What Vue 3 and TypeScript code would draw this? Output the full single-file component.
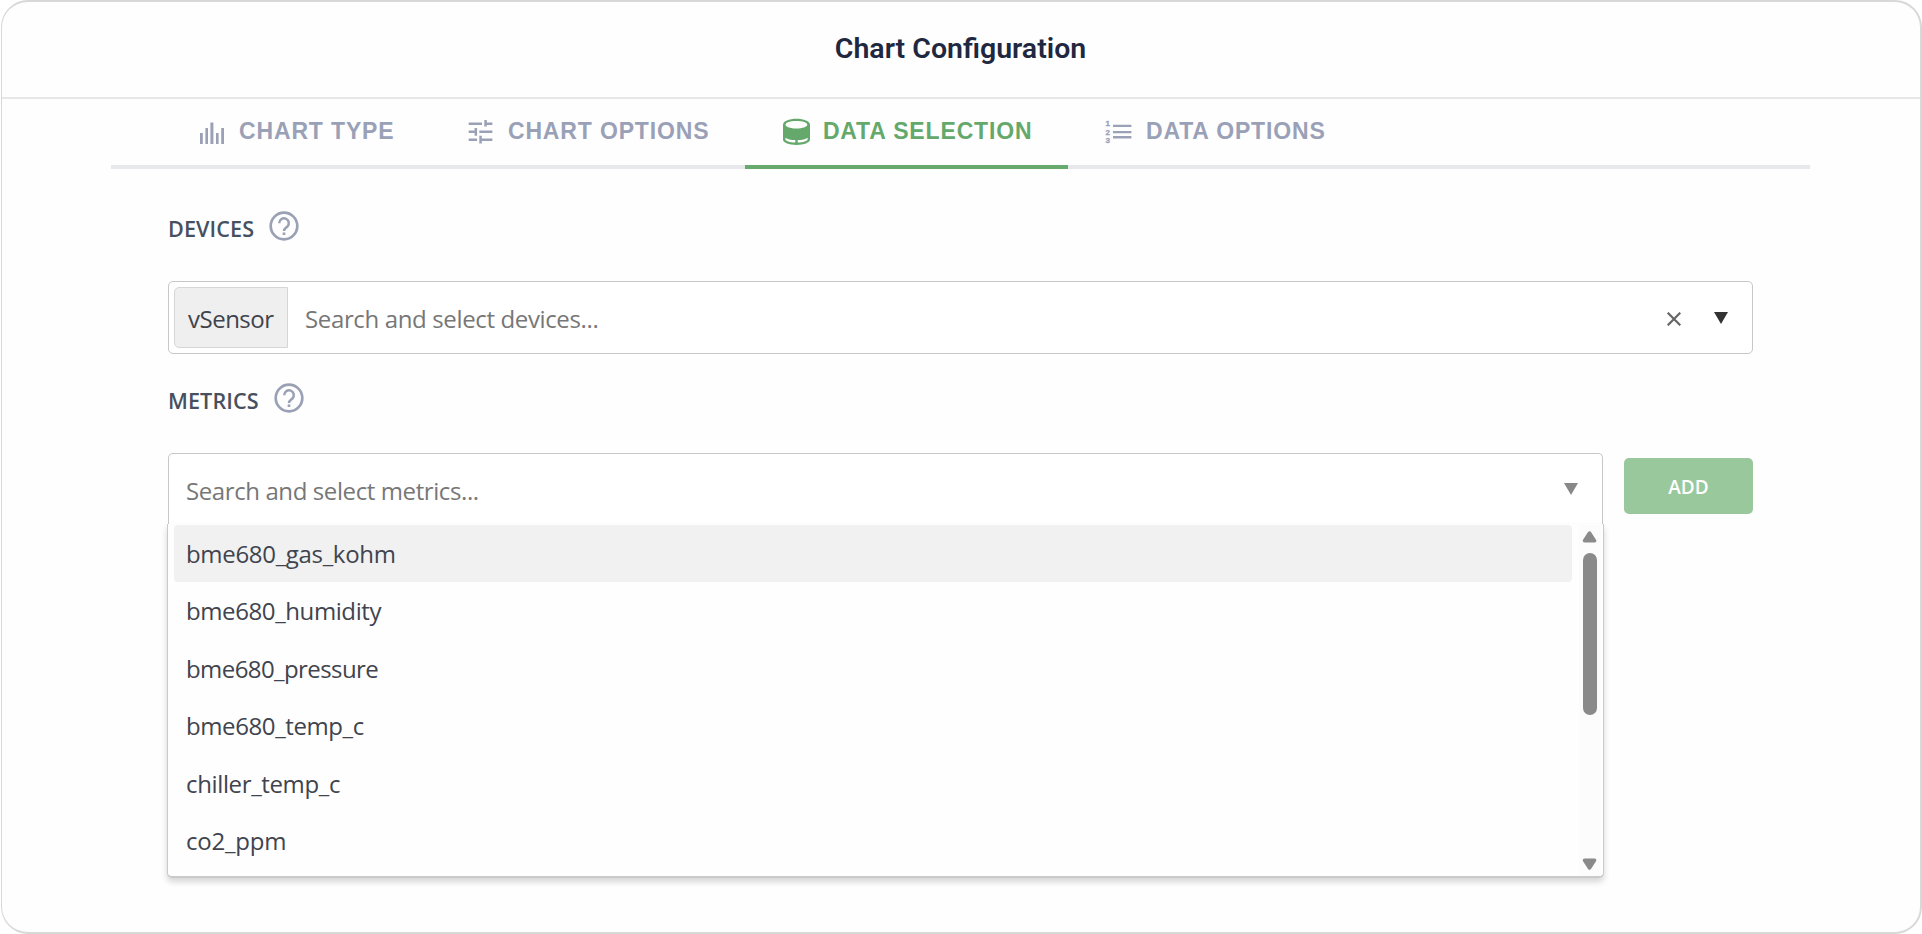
<script setup lang="ts">
import { ref } from 'vue'

type IconName = 'bars' | 'tune' | 'barrel' | 'list'

interface Tab {
  label: string
  icon: IconName
}

interface Metric {
  name: string
  spacing: number
}

const tabs: Tab[] = [
  { label: 'CHART TYPE', icon: 'bars' },
  { label: 'CHART OPTIONS', icon: 'tune' },
  { label: 'DATA SELECTION', icon: 'barrel' },
  { label: 'DATA OPTIONS', icon: 'list' },
]

const metrics: Metric[] = [
  { name: 'bme680_gas_kohm', spacing: -0.32 },
  { name: 'bme680_humidity', spacing: -0.4 },
  { name: 'bme680_pressure', spacing: -0.58 },
  { name: 'bme680_temp_c', spacing: -0.4 },
  { name: 'chiller_temp_c', spacing: -0.36 },
  { name: 'co2_ppm', spacing: -0.2 },
]

const activeTab = ref('DATA SELECTION')
const highlighted = ref(0)
</script>

<template>
  <main class="dialog">
    <header class="header">
      <h1>Chart Configuration</h1>
    </header>

    <nav class="tabs">
      <button
        v-for="tab in tabs"
        :key="tab.label"
        class="tab"
        :class="{ active: tab.label === activeTab }"
        @click="activeTab = tab.label"
      >
        <svg class="tab-icon" viewBox="0 0 30 30" fill="currentColor">
          <g v-if="tab.icon === 'bars'">
            <path d="M3 16h2.8v11H3zM8.4 11h2.6v16H8.4zM13.4 5.6h3v21.4h-3zM19 16h2.6v11H19zM24.2 11h2.8v16h-2.8z" />
          </g>
          <g v-else-if="tab.icon === 'tune'">
            <path d="M2.700 5.600H16v2.500H2.700zM18.300 3h2.500v2.600h5.600v2.500h-5.600v1.400h-2.500zM2.700 13.500h5.900v-2.400h2.500v7.600H8.600V16H2.700zM13.300 13.500h13.100V16H13.300zM2.700 21.500h8.400V24H2.700zM13.300 18.700h2.500v2.800h10.600V24H15.800v2.500h-2.500z" />
          </g>
          <g v-else-if="tab.icon === 'barrel'">
            <path
              fill-rule="evenodd"
              d="M2 7.8C2 4 8 1.7 15.4 1.7S29 4 29 7.8v14.8c0 3.200-6 5.400-13.500 5.400S2 25.800 2 22.600zM4.500 7.800c0 2.100 4.900 3.700 10.900 3.700s10.900-1.600 10.900-3.700-4.900-3.700-10.900-3.700S4.500 5.700 4.500 7.800zM4.400 20.700v1.800c0 1.500 4.400 2.800 9.900 3.100v-2.500c-4.300-.2-7.700-1-9.900-2.400zM26.600 20.700c-2.200 1.400-5.600 2.200-9.900 2.400v2.500c5.500-.3 9.900-1.600 9.900-3.100z"
            />
          </g>
          <g v-else>
            <path d="M9 7.700h18.400V10H9zM9 13.900h18.400v2.300H9zM9 19h18.400v2.400H9z" />
            <text class="numeral" x="1.600" y="9.200">1</text>
            <text class="numeral" x="1.600" y="17.700">2</text>
            <text class="numeral" x="1.600" y="25.800">3</text>
          </g>
        </svg>
        <span>{{ tab.label }}</span>
      </button>
    </nav>

    <section class="form">
      <div class="label devices-label">
        <span>DEVICES</span>
        <svg class="help" viewBox="0 0 30 30" fill="none" stroke="currentColor">
          <circle cx="15" cy="15" r="13.300" stroke-width="2.700" />
          <path d="M10.200 12.300a4.800 4.800 0 1 1 8.200 3.200c-1.700 1.600-3.400 2.300-3.400 4.500" stroke-width="2.500" />
          <path d="M15 21.400v2.600" stroke-width="2.700" />
        </svg>
      </div>

      <div class="select devices">
        <span class="chip">vSensor</span>
        <span class="placeholder">Search and select devices...</span>
        <svg class="clear" viewBox="0 0 14 14" fill="none" stroke="currentColor" stroke-width="2.200">
          <path d="M.7.7l12.600 12.600M13.300.7L.7 13.300" />
        </svg>
        <svg class="caret" viewBox="0 0 14 12" fill="currentColor"><path d="M0 0h14L7 12z" /></svg>
      </div>

      <div class="label metrics-label">
        <span>METRICS</span>
        <svg class="help" viewBox="0 0 30 30" fill="none" stroke="currentColor">
          <circle cx="15" cy="15" r="13.300" stroke-width="2.700" />
          <path d="M10.200 12.300a4.800 4.800 0 1 1 8.200 3.200c-1.700 1.600-3.400 2.300-3.400 4.500" stroke-width="2.500" />
          <path d="M15 21.400v2.600" stroke-width="2.700" />
        </svg>
      </div>

      <div class="metrics-row">
        <div class="combo">
          <div class="select metrics">
            <span class="placeholder">Search and select metrics...</span>
            <svg class="caret" viewBox="0 0 14 12" fill="currentColor"><path d="M0 0h14L7 12z" /></svg>
          </div>
          <div class="dropdown">
            <ul class="options">
              <li
                v-for="(metric, i) in metrics"
                :key="metric.name"
                class="option"
                :class="{ highlighted: i === highlighted }"
                :style="{ letterSpacing: metric.spacing + 'px' }"
                @mouseenter="highlighted = i"
              >
                {{ metric.name }}
              </li>
            </ul>
            <div class="scrollbar">
              <svg class="arrow" viewBox="0 0 15 12"><path d="M7.500 2l5 7.800h-10z" /></svg>
              <div class="thumb"></div>
              <svg class="arrow down" viewBox="0 0 15 12"><path d="M7.500 10l5-7.800h-10z" /></svg>
            </div>
          </div>
        </div>
        <button class="add">ADD</button>
      </div>
    </section>
  </main>
</template>

<style>
body {
  margin: 0;
  background: #fff;
}
</style>

<style scoped>
* {
  box-sizing: border-box;
}

svg {
  display: block;
  flex: none;
}

button {
  border: 0;
  margin: 0;
  padding: 0;
  background: none;
}

.dialog {
  height: 934px;
  margin-left: 1px;
  border: 2px solid #d8d8d8;
  border-left-width: 1px;
  border-radius: 27px;
  background: #fefefe;
  overflow: hidden;
  font-family: "Open Sans", "Noto Sans", sans-serif;
}

.header {
  height: 97px;
  padding: 0 1px 2px 0;
  border-bottom: 2px solid #e7e7e9;
  display: flex;
  align-items: center;
  justify-content: center;
}

h1 {
  margin: 0;
  font: 600 28.500px Roboto, sans-serif;
  color: #1f2840;
}

.tabs {
  display: flex;
  height: 70px;
  margin: 0 110px 0 109px;
  padding-left: 50px;
  border-bottom: 4px solid #e7e8eb;
}

.tab {
  height: 70px;
  padding: 0 35.500px 1px 36px;
  border-bottom: 4px solid transparent;
  display: flex;
  align-items: center;
  gap: 12px;
  font: bold 23px "Liberation Sans", Arial, sans-serif;
  letter-spacing: 0.850px;
  color: #9aa1b7;
  white-space: nowrap;
}

.tab.active {
  color: #64a96b;
  border-bottom-color: #66aa6d;
}

.tab-icon {
  width: 30px;
  height: 30px;
  margin-top: 1px;
}

.numeral {
  font: bold 8px "Liberation Sans", sans-serif;
  letter-spacing: 0;
  stroke: currentColor;
  stroke-width: 0.3px;
}

.form {
  padding: 0 167px 0 166px;
}

.label {
  display: flex;
  align-items: flex-start;
  gap: 15px;
  font-size: 21.600px;
  font-weight: 550;
  letter-spacing: 0.080px;
  line-height: 30px;
  color: #47505f;
}

.devices-label {
  height: 76px;
  padding-top: 42px;
}

.metrics-label {
  height: 63px;
  padding-top: 29px;
}

.label span {
  padding-top: 3px;
}

.help {
  width: 30px;
  height: 30px;
  color: #9aa1b5;
}

.select {
  display: flex;
  align-items: center;
  border: 1px solid #c6c7c9;
  border-radius: 5px;
  font-size: 24px;
  letter-spacing: -0.360px;
  background: #fff;
}

.devices {
  height: 73px;
  margin-top: 36px;
  padding: 0 24px 0 5px;
}

.chip {
  width: 114px;
  height: 61px;
  padding: 1px 0 0 13px;
  border: 1px solid #d6d6d6;
  border-radius: 5px 0 0 5px;
  background: #efefef;
  line-height: 59px;
  letter-spacing: -0.500px;
  color: #3f434c;
}

.placeholder {
  color: #777;
  padding-top: 2px;
}

.devices .placeholder {
  margin-left: 17px;
}

.clear {
  width: 14px;
  height: 14px;
  margin: 3px 33px 0 auto;
  color: #666;
}

.caret {
  width: 14px;
  height: 12px;
  color: #333;
}

.metrics-row {
  display: flex;
  align-items: flex-start;
  justify-content: space-between;
  margin-top: 36px;
}

.combo {
  width: 1436px;
}

.metrics {
  width: 1435px;
  height: 71px;
  padding: 0 24px 0 17px;
  border-bottom: 0;
  border-radius: 5px 5px 0 0;
  letter-spacing: -0.400px;
}

.metrics .caret {
  margin-left: auto;
  color: #888;
}

.dropdown {
  display: flex;
  justify-content: space-between;
  width: 1437px;
  height: 354px;
  margin-left: -1px;
  padding: 1px 2px 0 6px;
  border: 1px solid #cacaca;
  border-top: 0;
  border-bottom-width: 2px;
  border-radius: 0 0 5px 5px;
  background: #fefefe;
  box-shadow: 0 4px 6px rgba(0, 0, 0, 0.16);
}

.options {
  width: 1398px;
  margin: 0;
  padding: 0;
  list-style: none;
}

.option {
  height: 57.450px;
  padding: 0 0 0 12px;
  border-radius: 4px;
  font-size: 24px;
  line-height: 57.400px;
  color: #40444e;
}

.highlighted {
  background: #f1f1f1;
}

.scrollbar {
  display: flex;
  flex-direction: column;
  align-items: center;
  width: 22px;
  padding: 6px 1px 6px 0;
  background: #fcfcfc;
}

.arrow {
  width: 15px;
  height: 12px;
  fill: #8a8a8a;
  stroke: #8a8a8a;
  stroke-width: 3.500;
  stroke-linejoin: round;
}

.down {
  margin-top: auto;
}

.thumb {
  width: 14px;
  height: 162px;
  margin-top: 10px;
  border-radius: 7px;
  background: #8a8a8a;
}

.add {
  width: 129px;
  height: 56px;
  margin-top: 5px;
  padding-top: 2px;
  border-radius: 5px;
  background: #99c89c;
  color: #fff;
  font: 650 19px "Open Sans", "Noto Sans", sans-serif;
}
</style>
